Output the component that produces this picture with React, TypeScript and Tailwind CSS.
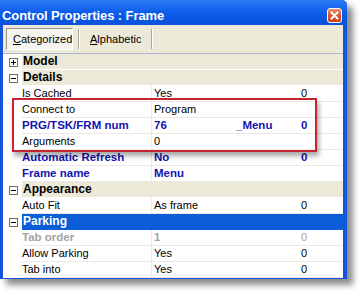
import React from "react";

type Row =
  | { kind: "cat"; label: string; open: boolean; selected?: boolean }
  | { kind: "item"; name: string; value: string; extra?: string; third?: string; tone?: "normal" | "blue" | "gray" };

const rows: Row[] = [
  { kind: "cat", label: "Model", open: false },
  { kind: "cat", label: "Details", open: true },
  { kind: "item", name: "Is Cached", value: "Yes", third: "0" },
  { kind: "item", name: "Connect to", value: "Program" },
  { kind: "item", name: "PRG/TSK/FRM num", value: "76", extra: "_Menu", third: "0", tone: "blue" },
  { kind: "item", name: "Arguments", value: "0" },
  { kind: "item", name: "Automatic Refresh", value: "No", third: "0", tone: "blue" },
  { kind: "item", name: "Frame name", value: "Menu", tone: "blue" },
  { kind: "cat", label: "Appearance", open: true },
  { kind: "item", name: "Auto Fit", value: "As frame", third: "0" },
  { kind: "cat", label: "Parking", open: true, selected: true },
  { kind: "item", name: "Tab order", value: "1", third: "0", tone: "gray" },
  { kind: "item", name: "Allow Parking", value: "Yes", third: "0" },
  { kind: "item", name: "Tab into", value: "Yes", third: "0" },
];

function ExpandBox({ open }: { open: boolean }) {
  return (
    <svg width="9" height="9" viewBox="0 0 9 9">
      <rect x="0.5" y="0.5" width="8" height="8" fill="#fff" stroke="#6f6f6f" />
      <line x1="2" y1="4.5" x2="7" y2="4.5" stroke="#000" />
      {!open && <line x1="4.5" y1="2" x2="4.5" y2="7" stroke="#000" />}
    </svg>
  );
}

function GridRow({ row }: { row: Row }) {
  if (row.kind === "cat") {
    return (
      <div className="flex h-[16px]">
        <div className="w-[19px] bg-white flex items-center justify-center pl-[1px]">
          <ExpandBox open={row.open} />
        </div>
        <div
          className={
            row.selected
              ? "flex-1 bg-[#0b5ed8] text-white border-b border-[#0b5ed8] font-bold text-[12px] leading-[15px] pl-[1px]"
              : "flex-1 bg-[#ECE9D8] text-black border-b border-white font-bold text-[12px] leading-[15px] pl-[1px]"
          }
        >
          {row.label}
        </div>
      </div>
    );
  }

  const tone = row.tone ?? "normal";
  const txt =
    tone === "blue"
      ? "text-[#1414b0] font-bold text-[11.5px]"
      : tone === "gray"
      ? "text-[#a3a3a3] font-bold text-[11.5px]"
      : "text-black text-[11px]";
  const thirdTxt = tone === "gray" ? "text-[#a3a3a3] text-[11px]" : txt;

  return (
    <div className="flex h-[16px]">
      <div className="w-[19px] bg-white" />
      <div className="flex flex-1 bg-white border-b border-[#ECEAE0] leading-[15px]">
        <div className={`w-[130px] border-r border-[#ECEAE0] whitespace-nowrap ${txt}`}>{row.name}</div>
        <div className={`flex w-[147px] pl-[2px] whitespace-nowrap ${txt}`}>
          <span className="w-[82px]">{row.value}</span>
          {row.extra && <span>{row.extra}</span>}
        </div>
        <div className={`flex-1 pl-[2px] ${thirdTxt}`}>{row.third ?? ""}</div>
      </div>
    </div>
  );
}

export default function App() {
  return (
    <div
      className="relative w-[361px] h-[291px] bg-white overflow-hidden"
      style={{ fontFamily: '"Liberation Sans", Arial, sans-serif' }}
    >
      <div className="w-[347px] rounded-tr-[5px] bg-[#1454dc] shadow-[6px_6px_6px_rgba(0,0,0,0.45)]">
        {/* title bar */}
        <div className="h-[25px] flex items-center pt-[6px] pr-[5px] pl-[2px] rounded-tr-[5px] bg-gradient-to-b from-[#2a7cf4] via-[#0c5ceb] to-[#0a52d8]">
          <span className="flex-1 text-white font-bold text-[13px] leading-none tracking-[-0.1px]">
            Control Properties : Frame
          </span>
          <div className="w-[15px] h-[15px] rounded-[3px] border border-white bg-gradient-to-b from-[#e98b6b] via-[#d9532b] to-[#c2421c] flex items-center justify-center">
            <svg width="9" height="9" viewBox="0 0 9 9">
              <path d="M1.5 1.5 L7.5 7.5 M7.5 1.5 L1.5 7.5" stroke="#fff" strokeWidth="2" strokeLinecap="square" />
            </svg>
          </div>
        </div>

        {/* body */}
        <div className="ml-[3px] mr-[4px] pb-[1px]">
          <div className="h-[28px] bg-[#ECE9D8] flex items-center pl-[3px] text-[11px] text-black">
            <div className="w-[67px] h-[22px] border border-t-[#9d998a] border-l-[#9d998a] border-b-white border-r-white bg-[#f4f3ee] flex items-center pl-[6px]">
              <span>
                <u>C</u>ategorized
              </span>
            </div>
            <div className="ml-[5px] h-[20px] w-[2px] border-l border-[#aca899] border-r border-r-white" />
            <div className="w-[71px] h-[22px] flex items-center pl-[10px]">
              <span>
                <u>A</u>lphabetic
              </span>
            </div>
            <div className="h-[20px] w-[2px] border-l border-[#aca899] border-r border-r-white" />
          </div>

          <div className="border-t border-[#a9b8cc] bg-white">
            {rows.map((r, i) => (
              <GridRow key={i} row={r} />
            ))}
          </div>
        </div>
      </div>

      {/* annotation box */}
      <div className="absolute left-[12px] top-[98px] w-[305px] h-[54px] border-2 border-[#c3262f] shadow-[2px_4px_5px_rgba(0,0,0,0.35)]" />
    </div>
  );
}
